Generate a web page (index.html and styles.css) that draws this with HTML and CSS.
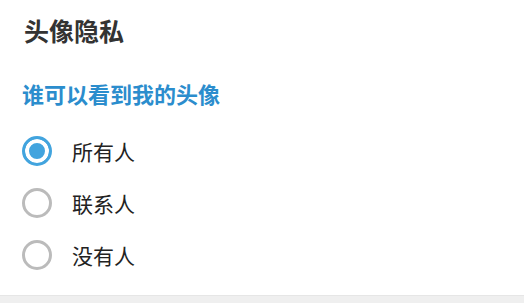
FILE: index.html
```html
<!doctype html>
<html lang="zh-CN">
<head>
    <meta charset="UTF-8">
    <meta name="viewport" content="width=device-width, initial-scale=1.0">
    <title>头像隐私</title>
    <link rel="stylesheet" href="styles.css">
</head>
<body>

<div class="page">
    <h2 class="title">头像隐私</h2>
    <h3 class="sub">谁可以看到我的头像</h3>
    <ul class="opts">
        <li>
            <label>
                <input type="radio" name="avatar" checked>
                <span>所有人</span>
            </label>
        </li>
        <li>
            <label>
                <input type="radio" name="avatar">
                <span>联系人</span>
            </label>
        </li>
        <li>
            <label>
                <input type="radio" name="avatar">
                <span>没有人</span>
            </label>
        </li>
    </ul>
</div>
<div class="foot"></div>

</body>
</html>
```

FILE: styles.css
```css
body{
    margin: 0;
    background-color: #fff;
    font-family: "Noto Sans CJK SC", "Noto Sans", sans-serif;
}
ul{
    margin: 0;
    padding: 0;
    list-style: none;
}
.page{
    height: 295px;
    box-sizing: border-box;
    padding: 17px 22px 0;
}
.title{
    margin: 0 0 0 2px;
    font-size: 25px;
    line-height: 26px;
    font-weight: bold;
    color: #333;
}
.sub{
    margin: 37px 0 0;
    font-size: 22px;
    line-height: 26px;
    font-weight: bold;
    color: #2b8dcd;
}
.opts{
    margin-top: 19px;
}
.opts li{
    height: 52px;
}
.opts label{
    display: flex;
    align-items: center;
    height: 100%;
    cursor: pointer;
}
.opts input{
    appearance: none;
    -webkit-appearance: none;
    margin: 0;
    width: 30px;
    height: 30px;
    border: 3px solid #bbb;
    border-radius: 50%;
    box-sizing: border-box;
    outline: none;
}
.opts input:checked{
    border-color: #42a4de;
    background-color: #42a4de;
    box-shadow: inset 0 0 0 4px #fff;
}
.opts span{
    margin-left: 20px;
    font-size: 21px;
    line-height: 26px;
    color: #222;
}
.foot{
    height: 8px;
    background-color: #efefef;
    border-top: 1px solid #e6e6e6;
    box-sizing: border-box;
}
```
